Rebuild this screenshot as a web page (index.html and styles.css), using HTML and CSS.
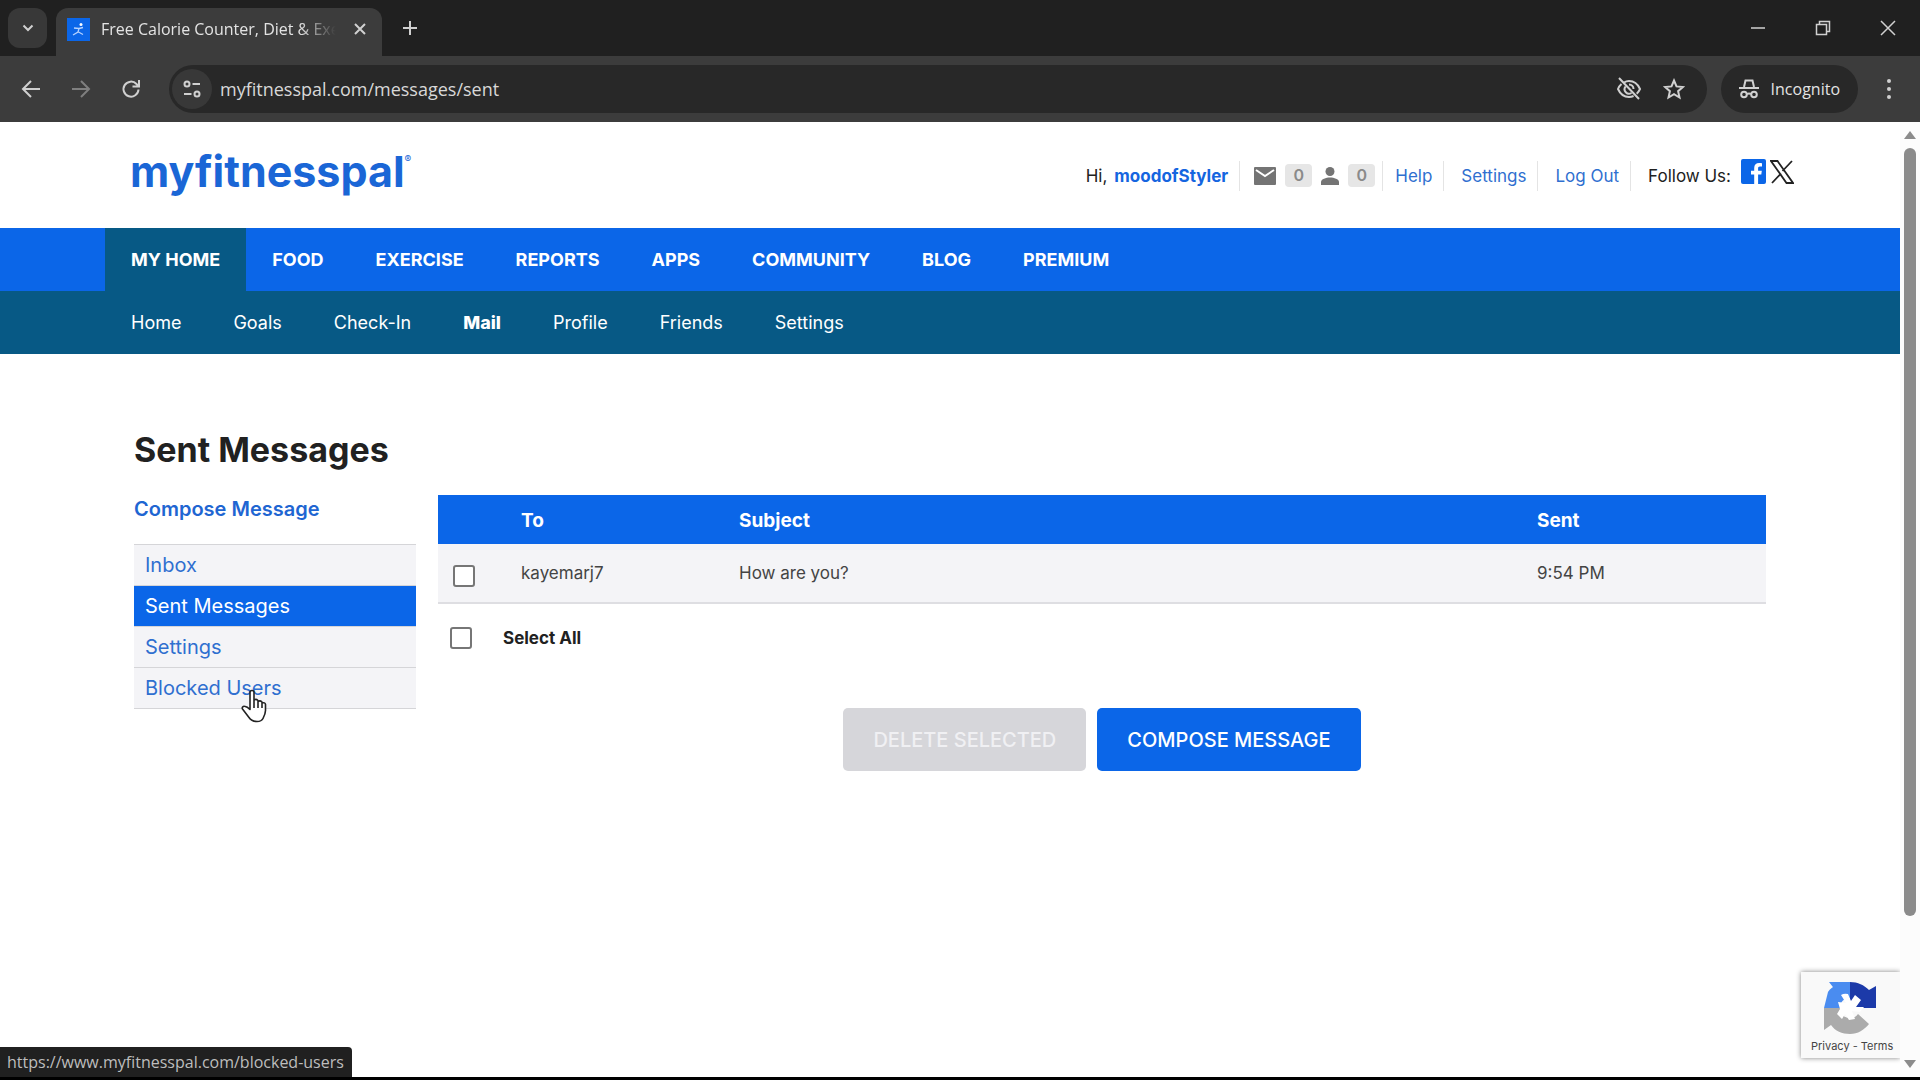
FILE: index.html
```html
<!DOCTYPE html>
<html lang="en">
  <head>
    <meta charset="UTF-8" />
    <meta name="viewport" content="width=device-width, initial-scale=1.0" />
    <title>Free Calorie Counter, Diet &amp; Exercise Journal</title>
    <link rel="stylesheet" href="styles.css">
  </head>
  <body>
    <div class="tabstrip">
      <button class="tab-search" aria-label="Search tabs">
        <svg width="14" height="14" viewBox="0 0 14 14"><path d="M2.500 4.500l4.500 4.500 4.500-4.500" /></svg>
      </button>
      <div class="tab">
        <svg class="favicon" width="23" height="23" viewBox="0 0 23 23">
          <rect width="23" height="23" fill="#0b66e8" />
          <circle cx="14" cy="6.500" r="1.500" fill="#fff" />
          <path d="M7 10l5 .5 4-1M12 10.500l-1 3.500-5 3M11.500 14l4.500 2.500" fill="none" stroke="#b5d2ff" stroke-width="1.300" />
        </svg>
        <span class="tab-title">Free Calorie Counter, Diet &amp; Exe</span>
        <button class="tab-close" aria-label="Close tab">
          <svg width="14" height="14" viewBox="0 0 14 14"><path d="M2 2l10 10M12 2L2 12" /></svg>
        </button>
      </div>
      <button class="new-tab" aria-label="New tab">
        <svg width="16" height="16" viewBox="0 0 16 16"><path d="M8 1v14M1 8h14" /></svg>
      </button>
      <div class="window-buttons">
        <button aria-label="Minimize"><svg width="16" height="16" viewBox="0 0 16 16"><path d="M1 8h14" /></svg></button>
        <button aria-label="Restore"><svg width="16" height="16" viewBox="0 0 16 16"><path d="M1.500 4.500h10v10h-10zM4.500 4.500v-3h10v10h-3" /></svg></button>
        <button aria-label="Close"><svg width="16" height="16" viewBox="0 0 16 16"><path d="M1 1l14 14M15 1L1 15" /></svg></button>
      </div>
    </div>

    <div class="toolbar">
      <button aria-label="Back"><svg width="20" height="20" viewBox="0 0 20 20"><path d="M19 10H2M10 2l-8 8 8 8" /></svg></button>
      <button class="disabled" aria-label="Forward"><svg width="20" height="20" viewBox="0 0 20 20"><path d="M1 10h17M10 2l8 8-8 8" /></svg></button>
      <button aria-label="Reload"><svg width="20" height="20" viewBox="0 0 20 20"><path d="M17.500 10.500A7.500 7.500 0 1 1 15.500 5L18 7.500M18 1v6.500h-6.500" /></svg></button>
      <div class="omnibox">
        <button class="site-info" aria-label="Site information">
          <svg width="20" height="20" viewBox="0 0 20 20"><circle cx="5" cy="5" r="2.500" /><path d="M10.500 5H18M2 15h7.500" /><circle cx="15" cy="15" r="2.500" /></svg>
        </button>
        <input class="url" type="text" aria-label="Address" value="myfitnesspal.com/messages/sent" />
        <button aria-label="Third-party cookies blocked">
          <svg width="26" height="24" viewBox="0 0 26 24"><path d="M8 5.500C9.500 4.500 11 4 13 4c5 0 9 3.500 11 8-.8 1.800-1.900 3.400-3.300 4.700M5.500 7C4 8.300 2.800 10 2 12c2 4.500 6 8 11 8 1.700 0 3.200-.4 4.600-1M9.500 9.500A4.500 4.500 0 0 0 15.500 16M13 7.500a4.500 4.500 0 0 1 4.500 4.500M3 1l20 21" /></svg>
        </button>
        <button aria-label="Bookmark this tab">
          <svg width="22" height="22" viewBox="0 0 22 22"><path d="M11 2.500l2.500 5.900 6.400.6-4.800 4.200 1.400 6.300L11 16.200l-5.500 3.300 1.400-6.300L2.100 9l6.400-.6z" /></svg>
        </button>
      </div>
      <button class="incognito">
        <svg width="20" height="20" viewBox="0 0 20 20"><path d="M5 8l1.500-6.500h7L15 8M0 9h20" /><circle cx="5" cy="15.500" r="2.800" /><circle cx="15" cy="15.500" r="2.800" /><path d="M8 15q2-1 4 0" /></svg>
        <span>Incognito</span>
      </button>
      <button class="menu" aria-label="Menu"><svg width="6" height="22" viewBox="0 0 6 22"><circle cx="3" cy="3" r="2" /><circle cx="3" cy="11" r="2" /><circle cx="3" cy="19" r="2" /></svg></button>
    </div>

    <div class="viewport">
      <div class="page">
        <header class="header">
          <a class="logo" href="#">myfitnesspal<sup>®</sup></a>
          <ul class="user-nav">
            <li>Hi, <a class="username" href="#">moodofStyler</a></li>
            <li class="counts">
              <svg width="22" height="18" viewBox="0 0 22 18"><path d="M1 0h20a1 1 0 0 1 1 1v16a1 1 0 0 1-1 1H1a1 1 0 0 1-1-1V1a1 1 0 0 1 1-1z" fill="#747474" /><path d="M2 3l9 6 9-6" fill="none" stroke="#fff" stroke-width="2" /></svg>
              <a class="badge" href="#">0</a>
              <svg width="18" height="18" viewBox="0 0 18 18"><circle cx="9" cy="4.500" r="4.500" fill="#747474" /><path d="M0 18v-3c0-3 5-4.500 9-4.500s9 1.500 9 4.500v3z" fill="#747474" /></svg>
              <a class="badge" href="#">0</a>
            </li>
            <li><a href="#">Help</a></li>
            <li><a href="#">Settings</a></li>
            <li><a href="#">Log Out</a></li>
            <li class="follow">
              <span>Follow Us:</span>
              <a href="#" aria-label="Facebook"><svg width="25" height="25" viewBox="0 0 25 25"><rect width="25" height="25" rx="2" fill="#0b66e8" /><path d="M13.200 25v-9.500H10v-3.800h3.200V9c0-3.200 2-5 4.900-5 1.400 0 2.600.1 2.900.2v3.400h-2c-1.600 0-1.900.8-1.900 1.900v2.200h3.700l-.5 3.800h-3.200V25z" fill="#fff" /></svg></a>
              <a href="#" aria-label="X"><svg width="24" height="24" viewBox="0 0 24 24"><path d="M1 1h6.500L23 23h-6.500zM22 1l-9.500 10M11 13.500L2 23" fill="none" stroke="#222" stroke-width="1.800" /></svg></a>
            </li>
          </ul>
        </header>

        <nav class="nav">
          <a class="active" href="#">MY HOME</a>
          <a href="#">FOOD</a>
          <a href="#">EXERCISE</a>
          <a href="#">REPORTS</a>
          <a href="#">APPS</a>
          <a href="#">COMMUNITY</a>
          <a href="#">BLOG</a>
          <a href="#">PREMIUM</a>
        </nav>
        <nav class="subnav">
          <a href="#">Home</a>
          <a href="#">Goals</a>
          <a href="#">Check-In</a>
          <a class="active" href="#">Mail</a>
          <a href="#">Profile</a>
          <a href="#">Friends</a>
          <a href="#">Settings</a>
        </nav>

        <main class="content">
          <h1>Sent Messages</h1>
          <div class="columns">
            <aside class="sidebar">
              <a class="compose-link" href="#">Compose Message</a>
              <ul>
                <li><a href="#">Inbox</a></li>
                <li><a class="active" href="#">Sent Messages</a></li>
                <li><a href="#">Settings</a></li>
                <li class="hovered">
                  <a href="#">Blocked Users</a>
                  <svg class="cursor" width="28" height="34" viewBox="0 0 28 34"><path d="M10 19V3.500a2 2 0 0 1 4 0V13v-2q2-1.500 4 .5V14v-1.500q2-1.500 4 .5v2-1q3-1 3.500 1.500v6c0 3-1 5-2.500 8-1 2-3 3-6 3-4 0-6-1-8-4l-6.500-8.500c-.8-1.500.5-3 2-2.800 2 .2 3.500 1 5.500 3.300zM14 12v7M18 13v6M22 14v5" fill="#fff" stroke="#222" stroke-width="1.600" stroke-linejoin="round" /></svg>
                </li>
              </ul>
            </aside>

            <form class="messages">
              <table>
                <thead>
                  <tr>
                    <th class="col-check"></th>
                    <th class="col-to">To</th>
                    <th>Subject</th>
                    <th class="col-sent">Sent</th>
                  </tr>
                </thead>
                <tbody>
                  <tr>
                    <td class="col-check"><input type="checkbox" aria-label="Select message to kayemarj7" /></td>
                    <td>kayemarj7</td>
                    <td>How are you?</td>
                    <td>9:54 PM</td>
                  </tr>
                </tbody>
              </table>
              <div class="select-all">
                <input type="checkbox" id="selectAll" />
                <label for="selectAll">Select All</label>
              </div>
              <div class="buttons">
                <button type="button" class="delete" disabled>DELETE SELECTED</button>
                <button type="button">COMPOSE MESSAGE</button>
              </div>
            </form>
          </div>
        </main>

        <div class="recaptcha">
          <svg width="54" height="54" viewBox="0 0 54 54">
            <path d="M27 1C17 1 9 5 5 11L1 27h16c0-6 4-10 10-10z" fill="#4a8cf0" />
            <path d="M6 1h21v16l-5-5-9-2z" fill="#4a8cf0" />
            <path d="M27 1c8 0 14 3 19 8l7-4v22H27V17z" fill="#1c3aa9" />
            <path d="M1 27h16c0 6 4 10 10 10 3 0 6-1 8-4l11 10c-5 6-11 10-19 10-8 0-15-3-19-9l-7 5z" fill="#ababab" />
            <path d="M15 21l8 1-5-8q3-2 7-1l3 7 4-6 6 5-5 7h8l-4 5-8-1 3 8-6 1-4-6-3 5-5-5 3-5z" fill="#fff" />
          </svg>
          <p><a href="#">Privacy</a> - <a href="#">Terms</a></p>
        </div>
        <div class="status">https://www.myfitnesspal.com/blocked-users</div>
      </div>
      <div class="scrollbar">
        <svg width="12" height="8" viewBox="0 0 12 8"><path d="M0 8l6-8 6 8z" /></svg>
        <div class="track"><div class="thumb"></div></div>
        <svg width="12" height="8" viewBox="0 0 12 8"><path d="M0 0l6 8 6-8z" /></svg>
      </div>
    </div>
  </body>
</html>
```
FILE: styles.css
```css
* {
  box-sizing: border-box;
}
body {
  margin: 0;
  min-height: 100vh;
  display: flex;
  flex-direction: column;
  font-family: Inter, "Liberation Sans", sans-serif;
  font-size: 17px;
  line-height: 24px;
  color: #212121;
  background: #fff;
  border-bottom: 3px solid #000;
}
ul {
  list-style: none;
  margin: 0;
  padding: 0;
}
a {
  color: #2f6fd0;
  text-decoration: none;
}
button {
  font-family: inherit;
  border: none;
  padding: 0;
  background: none;
  cursor: pointer;
}
svg {
  display: block;
  flex: none;
}

/* browser window */
.tabstrip,
.toolbar {
  display: flex;
  align-items: center;
  font-family: "Open Sans", "Noto Sans", sans-serif;
  color: #e3e3e3;
}
.tabstrip svg:not(.favicon),
.toolbar svg {
  fill: none;
  stroke: #d0d0d0;
  stroke-width: 2;
}
.tabstrip {
  height: 56px;
  padding: 0 0 0 8px;
  background: #202020;
}
.tab-search {
  width: 39px;
  height: 40px;
  border-radius: 12px;
  background: #383838;
  display: flex;
  align-items: center;
  justify-content: center;
}
.tab {
  align-self: flex-end;
  display: flex;
  align-items: center;
  width: 326px;
  height: 48px;
  margin-left: 9px;
  padding: 0 15px 6px 11px;
  border-radius: 12px 12px 0 0;
  background: #3c3c3c;
}
.tab-title {
  flex: 1;
  margin: 0 10px 0 11px;
  font-size: 16px;
  white-space: nowrap;
  mask-image: linear-gradient(to right, #000 82%, transparent 97%);
}
.new-tab {
  margin-left: 20px;
}
.window-buttons {
  margin-left: auto;
  display: flex;
}
.window-buttons button {
  width: 65px;
  height: 56px;
  display: flex;
  align-items: center;
  justify-content: center;
}
.window-buttons svg:not(.favicon) {
  stroke-width: 1.5;
}
.toolbar {
  height: 66px;
  padding: 0 28px 0 21px;
  background: #3c3c3c;
}
.toolbar > button {
  margin-right: 30px;
}
.toolbar > button:nth-child(3) {
  margin-right: 28px;
}
.toolbar .disabled {
  opacity: 0.45;
}
.omnibox {
  flex: 1;
  display: flex;
  align-items: center;
  gap: 21px;
  height: 48px;
  margin-right: 14px;
  padding: 0 22px 0 3px;
  border-radius: 24px;
  background: #282828;
}
.site-info {
  width: 40px;
  height: 40px;
  border-radius: 20px;
  background: #383838;
  display: flex;
  align-items: center;
  justify-content: center;
}
.url {
  flex: 1;
  margin-left: -13px;
  padding: 0;
  border: none;
  outline: none;
  font-family: inherit;
  font-size: 18px;
  color: #d8d8d8;
  background: none;
}
.toolbar .incognito {
  display: flex;
  align-items: center;
  gap: 12px;
  height: 48px;
  margin-right: 28px;
  padding: 0 18px;
  border-radius: 24px;
  background: #282828;
  color: #e3e3e3;
  font-size: 16px;
}
.toolbar > .menu {
  margin-right: 0;
}
.toolbar .menu svg {
  fill: #d0d0d0;
  stroke: none;
}

.viewport {
  flex: 1;
  display: flex;
}
.page {
  position: relative;
  flex: 1;
}
.scrollbar {
  width: 20px;
  padding: 9px 0;
  display: flex;
  flex-direction: column;
  align-items: center;
  gap: 9px;
  background: #fcfcfc;
  fill: #8b8b8b;
}
.track {
  flex: 1;
}
.thumb {
  width: 12px;
  height: 85%;
  border-radius: 6px;
  background: #8b8b8b;
}

/* site header */
.header {
  display: flex;
  align-items: center;
  justify-content: space-between;
  height: 106px;
  padding: 0 106px 0 130px;
}
.logo {
  padding-bottom: 8px;
  font-size: 43px;
  line-height: 54px;
  font-weight: 700;
  color: #1a66d6;
}
.logo sup {
  font-size: 10px;
  line-height: 10px;
  vertical-align: 24px;
  font-weight: 400;
}
.user-nav {
  display: flex;
  align-items: center;
  padding-top: 1px;
}
.user-nav li {
  display: flex;
  align-items: center;
  height: 30px;
  padding: 0 11px 0 17px;
  border-right: 1px solid #e4e4e4;
}
.user-nav .username {
  margin-left: 7px;
  font-weight: 700;
  color: #1565e0;
}
.user-nav .counts {
  gap: 9px;
  padding: 0 7px 0 14px;
}
.user-nav .counts + li {
  padding-left: 12px;
}
.user-nav .follow {
  padding-right: 0;
  border-right: none;
  gap: 4px;
}
.follow span {
  margin-right: 6px;
}
.follow svg {
  margin-bottom: 8px;
}
.badge {
  width: 27px;
  height: 23px;
  border-radius: 4px;
  background: #e6e6e6;
  color: #8a8a8a;
  font-size: 16px;
  line-height: 23px;
  font-weight: 600;
  text-align: center;
}
.nav,
.subnav {
  display: flex;
  padding: 0 105px;
  background: #0b66e8;
}
.nav a,
.subnav a {
  padding: 1px 26px 0;
  color: #fff;
  font-size: 18px;
  line-height: 62px;
}
.nav a {
  font-weight: 700;
}
.nav .active,
.subnav {
  background: #075985;
}
.subnav .active {
  font-weight: 800;
}

/* messages */
.content {
  padding: 73px 134px 0;
}
h1 {
  margin: 0 0 23px;
  font-size: 34px;
  line-height: 45px;
  font-weight: 700;
}
.columns {
  display: flex;
  align-items: flex-start;
  gap: 22px;
}
.sidebar {
  width: 282px;
  font-size: 20px;
}
.compose-link {
  display: block;
  padding: 2px 0 23px;
  font-weight: 600;
  color: #1f66d2;
}
.sidebar ul {
  border-top: 1px solid #d5d5d8;
}
.sidebar li {
  border-bottom: 1px solid #d5d5d8;
}
.sidebar li a {
  display: block;
  padding: 1px 11px 0;
  line-height: 39px;
  background: #f4f4f7;
}
.sidebar li a.active {
  color: #fff;
  background: #0b66e8;
}
.hovered {
  position: relative;
}
.cursor {
  position: absolute;
  left: 106px;
  top: 21px;
}
.messages {
  flex: 1;
}
table {
  width: 100%;
  border-collapse: collapse;
  table-layout: fixed;
}
th {
  height: 49px;
  padding: 2px 0 0;
  font-size: 19px;
  font-weight: 700;
  text-align: left;
  color: #fff;
  background: #0b66e8;
}
td {
  height: 59px;
  padding: 0;
  color: #444;
  background: #f4f4f7;
  border-bottom: 2px solid #dedee2;
}
.col-check {
  width: 83px;
  padding-top: 5px;
  padding-left: 15px;
}
.col-to {
  width: 218px;
}
.col-sent {
  width: 229px;
}
input[type="checkbox"] {
  appearance: none;
  display: block;
  width: 22px;
  height: 22px;
  margin: 0;
  border: 2px solid #767676;
  border-radius: 3px;
  background: #fff;
}
.select-all {
  display: flex;
  align-items: center;
  gap: 31px;
  padding: 22px 12px 0;
}
.select-all label {
  font-weight: 700;
}
.buttons {
  display: flex;
  justify-content: center;
  gap: 11px;
  padding-top: 58px;
}
.buttons button {
  height: 63px;
  padding: 0 30px;
  border-radius: 5px;
  background: #0b66e8;
  color: #fff;
  font-size: 20px;
  font-weight: 500;
}
.buttons .delete {
  background: #d6d6da;
  color: #f0f0f3;
}

/* pinned over the page */
.recaptcha {
  position: absolute;
  right: 0;
  bottom: 19px;
  width: 99px;
  height: 86px;
  padding: 9px 0 0 22px;
  background: #f9f9f9;
  box-shadow: 0 0 5px #808080;
  clip-path: inset(-8px 0 -8px -8px);
}
.recaptcha p {
  margin: 2px 0 0 -12px;
  font-size: 11px;
  line-height: 18px;
  color: #555;
}
.recaptcha a {
  color: #444;
}
.status {
  position: absolute;
  left: 0;
  bottom: 0;
  padding: 0 8px 0 7px;
  border-radius: 0 4px 0 0;
  background: #202020;
  color: #bdbdbd;
  font-family: "Open Sans", "Noto Sans", sans-serif;
  font-size: 16px;
  line-height: 30px;
}
```
